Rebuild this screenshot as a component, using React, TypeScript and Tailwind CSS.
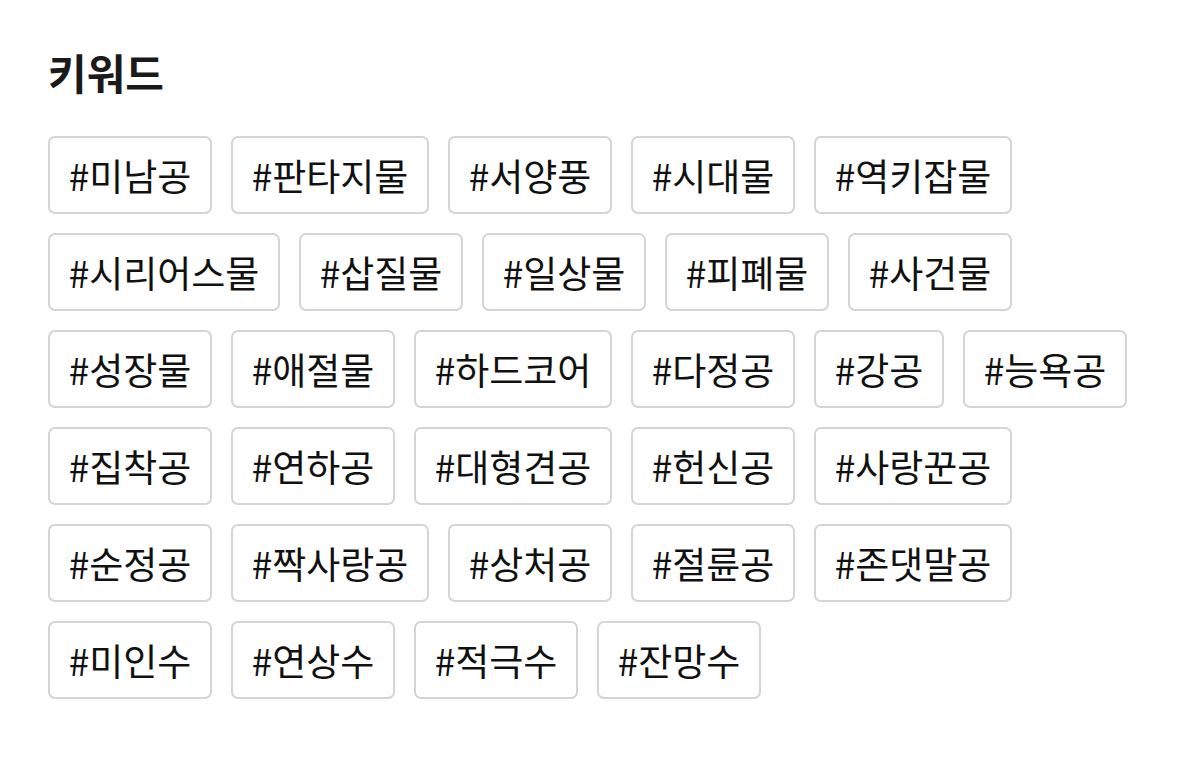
const keywords = [
  "미남공", "판타지물", "서양풍", "시대물", "역키잡물",
  "시리어스물", "삽질물", "일상물", "피폐물", "사건물",
  "성장물", "애절물", "하드코어", "다정공", "강공", "능욕공",
  "집착공", "연하공", "대형견공", "헌신공", "사랑꾼공",
  "순정공", "짝사랑공", "상처공", "절륜공", "존댓말공",
  "미인수", "연상수", "적극수", "잔망수",
];

// Tag width by number of Hangul syllables
const widthByLength: Record<number, string> = {
  2: "w-[130px]",
  3: "w-[164px]",
  4: "w-[198px]",
  5: "w-[232px]",
};

export default function App() {
  return (
    <div
      className="min-h-screen bg-white px-12 pt-[43px] text-[#111]"
      style={{ fontFamily: '"Noto Sans CJK KR", "Noto Sans", sans-serif' }}
    >
      <h1 className="text-[42px] font-bold leading-[58px] text-[#1a1a1a]">키워드</h1>
      <div className="mt-[35px] flex flex-wrap gap-[19px]">
        {keywords.map((k) => (
          <span
            key={k}
            className={`flex h-[78px] items-center justify-center whitespace-nowrap rounded-[7px] border-2 border-[#d4d4d4] text-[37px] leading-none ${widthByLength[k.length]}`}
          >
            #{k}
          </span>
        ))}
      </div>
    </div>
  );
}
